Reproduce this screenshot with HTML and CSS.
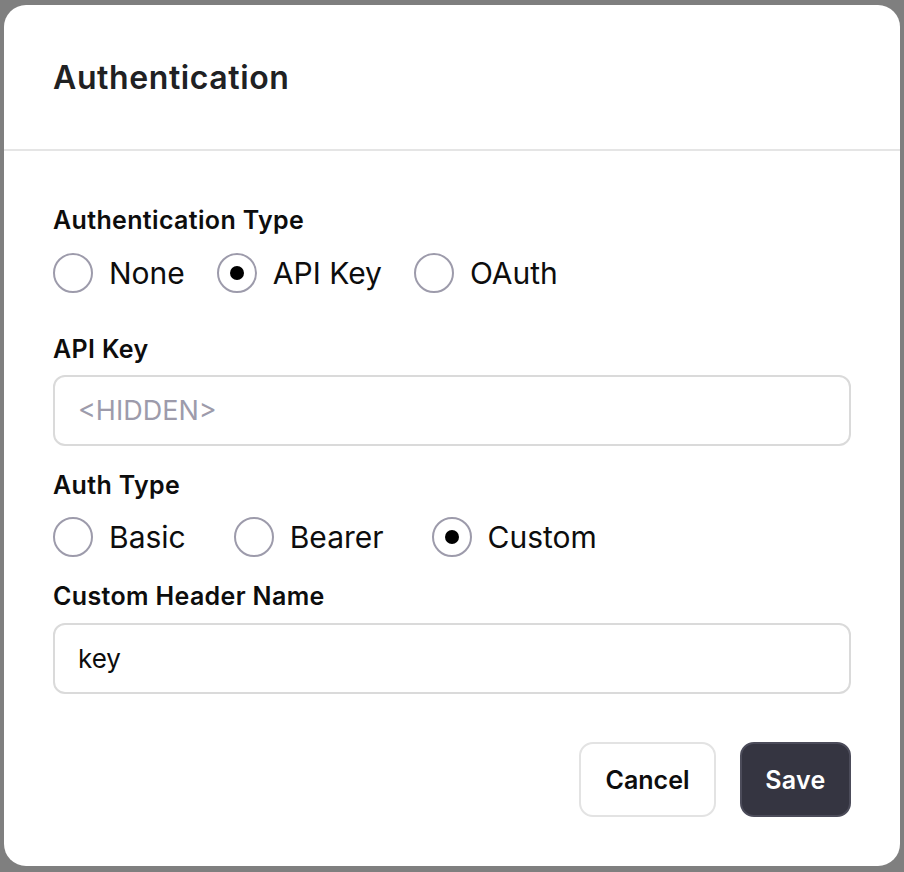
FILE: index.html
```html
<!DOCTYPE html>
<html lang="en">
<head>
<meta charset="utf-8">
<title>Authentication</title>
<link rel="stylesheet" href="styles.css">
</head>
<body>
<div class="backdrop">
  <div class="modal" role="dialog" aria-labelledby="dlg-title">
    <div class="modal-header">
      <h2 id="dlg-title" class="modal-title">Authentication</h2>
    </div>
    <div class="modal-body">
      <div class="field field-first">
        <div class="field-label">Authentication Type</div>
        <div class="radio-row">
          <label class="radio"><span class="radio-circle"></span><span class="radio-text">None</span></label>
          <label class="radio"><span class="radio-circle checked"></span><span class="radio-text">API Key</span></label>
          <label class="radio"><span class="radio-circle"></span><span class="radio-text">OAuth</span></label>
        </div>
      </div>
      <div class="field field-apikey">
        <div class="field-label">API Key</div>
        <div class="input placeholder">&lt;HIDDEN&gt;</div>
      </div>
      <div class="field field-authtype">
        <div class="field-label">Auth Type</div>
        <div class="radio-row wide">
          <label class="radio"><span class="radio-circle"></span><span class="radio-text">Basic</span></label>
          <label class="radio"><span class="radio-circle"></span><span class="radio-text">Bearer</span></label>
          <label class="radio"><span class="radio-circle checked"></span><span class="radio-text">Custom</span></label>
        </div>
      </div>
      <div class="field field-header">
        <div class="field-label">Custom Header Name</div>
        <div class="input">key</div>
      </div>
      <div class="modal-footer">
        <button class="btn btn-secondary">Cancel</button>
        <button class="btn btn-primary">Save</button>
      </div>
    </div>
  </div>
</div>
</body>
</html>
```
FILE: styles.css
```css
* { box-sizing: border-box; }
html, body { margin: 0; padding: 0; }
body {
  background: #7f7f7f;
  font-family: Inter, "Liberation Sans", sans-serif;
  color: #0d0d0d;
}
.backdrop {
  width: 904px;
  height: 872px;
  padding: 5px 4px 6px 4px;
}
.modal {
  width: 896px;
  height: 861px;
  background: #ffffff;
  border-radius: 22px;
  display: flex;
  flex-direction: column;
  overflow: hidden;
}
.modal-header {
  height: 146px;
  padding: 0 49px;
  display: flex;
  align-items: center;
  border-bottom: 2px solid #e5e5e5;
  flex-shrink: 0;
}
.modal-title {
  margin: 0;
  font-size: 32px;
  font-weight: 600;
  color: #202123;
  letter-spacing: 0.6px;
}
.modal-body {
  padding: 53px 49px 0 49px;
  display: flex;
  flex-direction: column;
}
.field { display: flex; flex-direction: column; }
.field-label {
  font-size: 25px;
  font-weight: 600;
  line-height: 32px;
  color: #0d0d0d;
  letter-spacing: 0.35px;
}
.field-first .field-label { margin-bottom: 17px; }
.field-apikey { margin-top: 40px; }
.field-apikey .field-label { margin-bottom: 10px; }
.field-authtype { margin-top: 23px; }
.field-authtype .field-label { margin-bottom: 16px; }
.field-header { margin-top: 23px; }
.field-header .field-label { margin-bottom: 11px; }
.radio-row {
  display: flex;
  align-items: center;
  gap: 32px;
  height: 40px;
}
.radio-row.wide { gap: 48px; }
.radio {
  display: flex;
  align-items: center;
  gap: 16px;
}
.radio-circle {
  width: 40px;
  height: 40px;
  border-radius: 50%;
  border: 2px solid #9d9bab;
  display: flex;
  align-items: center;
  justify-content: center;
}
.radio-circle.checked::after {
  content: "";
  width: 14px;
  height: 14px;
  border-radius: 50%;
  background: #000;
}
.radio-text {
  font-size: 30px;
  font-weight: 400;
  color: #0d0d0d;
}
.input {
  height: 71px;
  border: 2px solid #dadada;
  border-radius: 12px;
  padding: 0 23px;
  display: flex;
  align-items: center;
  font-size: 26px;
  color: #0d0d0d;
}
.input.placeholder { color: #9d9bab; font-size: 27px; }
.modal-footer {
  display: flex;
  justify-content: flex-end;
  gap: 24px;
  margin-top: 48px;
}
.btn {
  height: 75px;
  border-radius: 14px;
  font-family: Inter, "Liberation Sans", sans-serif;
  font-size: 25px;
  font-weight: 600;
  cursor: pointer;
}
.btn-secondary {
  width: 137px;
  background: #ffffff;
  border: 2px solid #e3e3e3;
  color: #0d0d0d;
}
.btn-primary {
  width: 111px;
  background: #353541;
  border: 2px solid #4c4c5a;
  color: #ffffff;
  letter-spacing: 0.3px;
}
```
